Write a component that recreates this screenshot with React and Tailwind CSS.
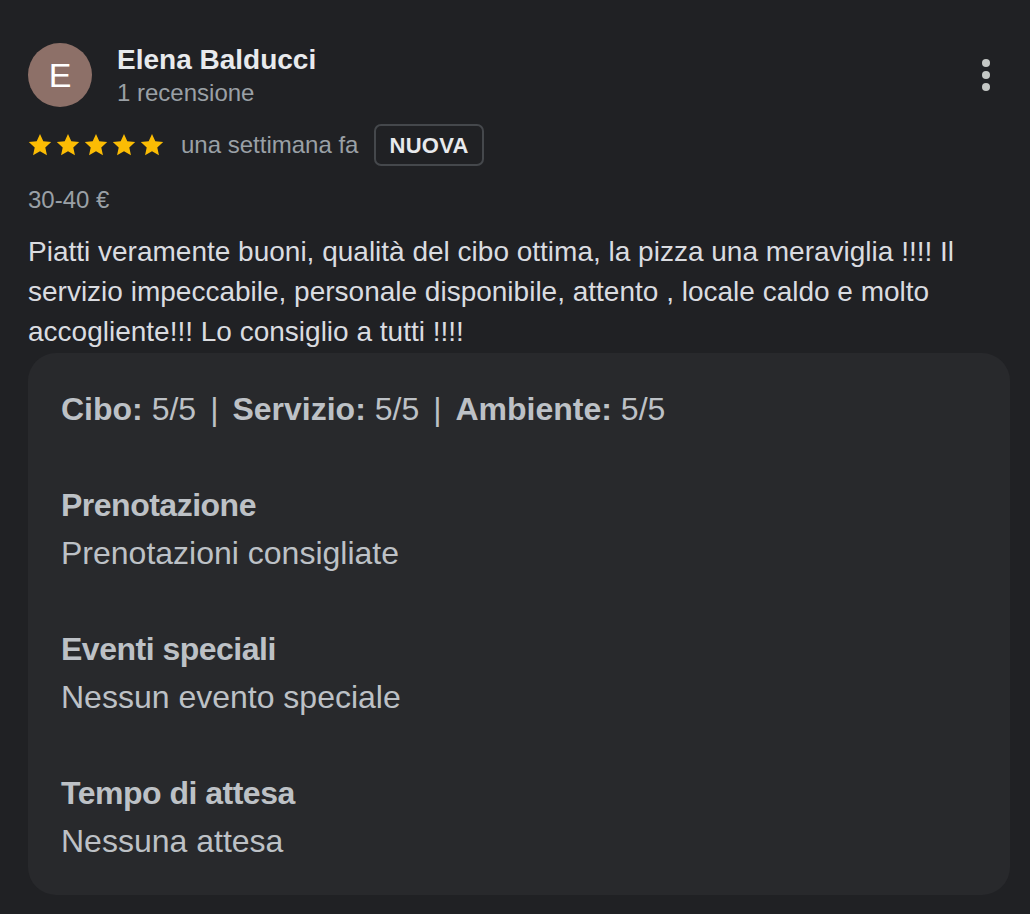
const font = { fontFamily: '"Liberation Sans", Arial, sans-serif' }

function Star() {
  return (
    <svg viewBox="0 0 24 24" className="w-[28px] h-[28px]" fill="#fbbc04">
      <path d="M12 2.6l2.83 6.2 6.77.72-5.07 4.56 1.43 6.66L12 17.3l-5.96 3.44 1.43-6.66L2.4 9.52l6.77-.72z" />
    </svg>
  )
}

function Section({ title, value }) {
  return (
    <div className="mt-12">
      <div className="font-bold tracking-[-0.5px]">{title}</div>
      <div>{value}</div>
    </div>
  )
}

export default function App() {
  return (
    <div className="min-h-[914px] bg-[#202124] pl-[28px] pr-[20px] pt-[43px] pb-[19px]" style={font}>
      <div className="flex items-start">
        <div className="w-16 h-16 rounded-full bg-[#8d7068] flex items-center justify-center text-white text-[34px] leading-none">
          E
        </div>
        <div className="ml-[25px] flex-1">
          <div className="text-[28px] leading-[34px] font-bold text-[#e8eaed]">Elena Balducci</div>
          <div className="text-[24px] leading-[32px] text-[#9aa0a6]">1 recensione</div>
        </div>
        <button className="w-12 h-12 mt-[8px] flex flex-col items-center justify-center gap-[4px]">
          <span className="w-2 h-2 rounded-full bg-[#c4c7c5]" />
          <span className="w-2 h-2 rounded-full bg-[#c4c7c5]" />
          <span className="w-2 h-2 rounded-full bg-[#c4c7c5]" />
        </button>
      </div>

      <div className="mt-[15px] flex items-center h-[42px]">
        <div className="flex -ml-[2px]">
          <Star />
          <Star />
          <Star />
          <Star />
          <Star />
        </div>
        <span className="ml-[15px] text-[24px] text-[#9aa0a6]">una settimana fa</span>
        <span className="ml-[16px] h-[42px] px-[13px] flex items-center rounded-[7px] border-2 border-[#45484c] text-[22px] font-bold text-[#e8eaed] tracking-[0.3px]">
          NUOVA
        </span>
      </div>

      <div className="mt-[18px] text-[24px] leading-[32px] text-[#9aa0a6]">30-40 €</div>

      <p className="mt-[16px] text-[28px] leading-[40px] text-[#dadce0]">
        Piatti veramente buoni, qualità del cibo ottima, la pizza una meraviglia !!!! Il servizio impeccabile, personale disponibile, attento , locale caldo e molto accogliente!!! Lo consiglio a tutti !!!!
      </p>

      <div className="mt-px rounded-[28px] bg-[#28292c] pl-[33px] pr-8 pt-8 pb-[30px] text-[32px] leading-[48px] text-[#bdc1c6]">
        <div>
          <span className="font-bold">Cibo:</span> 5/5
          <span className="mx-[14px]">|</span>
          <span className="font-bold">Servizio:</span> 5/5
          <span className="mx-[14px]">|</span>
          <span className="font-bold">Ambiente:</span> 5/5
        </div>
        <Section title="Prenotazione" value="Prenotazioni consigliate" />
        <Section title="Eventi speciali" value="Nessun evento speciale" />
        <Section title="Tempo di attesa" value="Nessuna attesa" />
      </div>
    </div>
  )
}
